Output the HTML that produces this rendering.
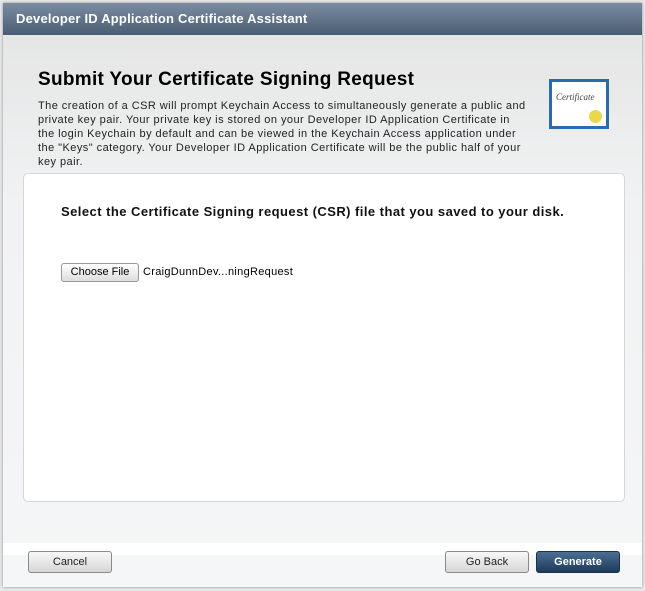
<!DOCTYPE html>
<html><head><style>
body{margin:0;width:645px;height:591px;background:#e8e9ea;position:relative;overflow:hidden;font-family:"Liberation Sans",sans-serif;}
.dlg{position:absolute;left:3px;top:3px;width:639px;height:584px;background:linear-gradient(#e3e3e3,#f1f2f3 200px,#f5f6f7);box-shadow:0 0 3px rgba(0,0,0,.4);}
.tb{position:absolute;left:0;top:0;width:639px;height:32px;background:linear-gradient(#7b8da1,#4a5d74);color:#fff;font-weight:bold;font-size:13px;line-height:32px;padding-left:13px;box-sizing:border-box;letter-spacing:0.2px;}
h1{position:absolute;left:35px;top:66px;margin:0;font-size:19px;font-weight:bold;color:#000;letter-spacing:0.3px;}
.p{position:absolute;left:35px;top:96px;white-space:nowrap;font-size:11px;line-height:14px;color:#222;letter-spacing:0.45px;}
.cert{position:absolute;left:546px;top:76px;width:60px;height:50px;background:#fff;border:3px solid #2a6bb0;box-sizing:border-box;}
.panel{position:absolute;left:20px;top:170px;width:600px;height:327px;background:#fff;border:1px solid #d6d6d6;border-radius:5px;}
.sel{position:absolute;left:37px;top:30px;font-size:13px;font-weight:bold;color:#111;letter-spacing:0.45px;}
.cf{position:absolute;left:37px;top:89px;width:76px;height:17px;border:1px solid #999;border-radius:3px;background:linear-gradient(#fff,#ddd);font-size:11px;text-align:center;line-height:17px;}
.fn{position:absolute;left:119px;top:92px;font-size:11px;letter-spacing:0.3px;}
.strip{position:absolute;left:0;top:540px;width:639px;height:12px;background:#fff;}
.btn{position:absolute;top:548px;width:84px;height:22px;border:1px solid #8a8a8a;border-radius:3px;background:linear-gradient(#f8f8f8,#d6d6d6);font-size:11px;text-align:center;line-height:21px;color:#222;box-sizing:border-box;}
.gen{background:linear-gradient(#4a6f93,#1e3a5a);border-color:#1b3350;color:#fff;font-weight:bold;}
</style></head><body>
<div class="dlg">
<div class="tb">Developer ID Application Certificate Assistant</div>
<h1>Submit Your Certificate Signing Request</h1>
<div class="p">The creation of a CSR will prompt Keychain Access to simultaneously generate a public and<br>private key pair. Your private key is stored on your Developer ID Application Certificate in<br>the login Keychain by default and can be viewed in the Keychain Access application under<br>the "Keys" category. Your Developer ID Application Certificate will be the public half of your<br>key pair.</div>
<div class="cert"><div style="font:italic 9px 'Liberation Serif',serif;color:#444;margin:10px 0 0 4px">Certificate</div><div style="position:absolute;right:4px;bottom:3px;width:13px;height:13px;border-radius:50%;background:#e8d84a"></div></div>
<div class="panel">
<div class="sel">Select the Certificate Signing request (CSR) file that you saved to your disk.</div>
<div class="cf">Choose File</div>
<div class="fn">CraigDunnDev...ningRequest</div>
</div>
<div class="strip"></div>
<div class="btn" style="left:25px">Cancel</div>
<div class="btn" style="left:442px">Go Back</div>
<div class="btn gen" style="left:533px">Generate</div>
</div>
</body></html>
